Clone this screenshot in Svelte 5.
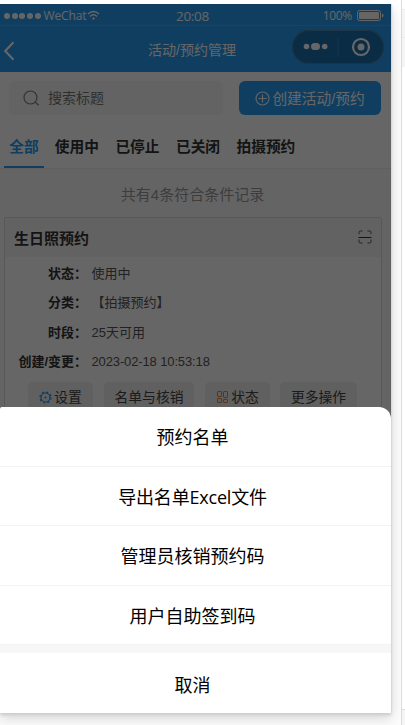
<script>
  const tabs = ['全部', '使用中', '已停止', '已关闭', '拍摄预约'];
  const rows = [
    ['状态', '使用中'],
    ['分类', '【拍摄预约】'],
    ['时段', '25天可用'],
    ['创建/变更', '2023-02-18 10:53:18']
  ];
  const actions = ['预约名单', '导出名单Excel文件', '管理员核销预约码', '用户自助签到码'];
</script>

<div class="stage">
  <div class="phone">
    <header>
      <div class="status">
        <div class="signal">
          {#each Array(5) as _}<i></i>{/each}
          <span>WeChat</span>
          <svg width="13" height="11" viewBox="0 0 13 11" fill="none" stroke="#fff" stroke-width="1.4">
            <path d="M1 4Q6.5-.8 12 4M3 6.4Q6.5 3.3 10 6.4" />
            <path d="M4.9 8.2Q6.5 7 8.1 8.2L6.5 10Z" fill="#fff" stroke="none" />
          </svg>
        </div>
        <span class="clock">20:08</span>
        <div class="power">
          <span>100%</span>
          <svg width="27" height="12" viewBox="0 0 27 12">
            <rect x=".5" y=".5" width="23" height="10" rx="2" fill="none" stroke="#fff" />
            <rect x="2" y="2" width="20" height="7" rx=".5" fill="#fff" />
            <path d="M25 3.500v4q1.500-.4 1.500-2T25 3.500Z" fill="#fff" />
          </svg>
        </div>
      </div>
      <div class="nav">
        <svg class="back" width="12" height="20" viewBox="0 0 12 20" fill="none" stroke="#fff" stroke-width="2"><path d="M9.500 1.200 1.200 10l8.300 8.800" /></svg>
        <h1>活动/预约管理</h1>
        <div class="capsule">
          <svg width="92" height="34" viewBox="0 0 92 34" fill="#fff">
            <circle cx="14.5" cy="16.5" r="2.8" /><rect x="19" y="13" width="9" height="7" rx="3.5" /><circle cx="32.7" cy="16.5" r="2.8" />
            <path d="M46 7.5v19" stroke="#4a82aa" />
            <circle cx="69" cy="17" r="8" fill="none" stroke="#fff" stroke-width="2.2" /><circle cx="69" cy="17" r="3.5" />
          </svg>
        </div>
      </div>
    </header>

    <div class="tools">
      <div class="search">
        <svg width="17" height="17" viewBox="0 0 17 17" fill="none" stroke="#73818a" stroke-width="1.2"><circle cx="7.5" cy="7.5" r="6.5" /><path d="m12.3 12.3 3.4 3" /></svg>
        <span>搜索标题</span>
      </div>
      <div class="create">
        <svg width="15" height="15" viewBox="0 0 15 15" fill="none" stroke="#fff" stroke-width="1.1"><circle cx="7.5" cy="7.5" r="6.5" /><path d="M3.5 7.5h8M7.5 3.5v8" /></svg>
        <span>创建活动/预约</span>
      </div>
    </div>

    <div class="tabs">
      {#each tabs as tab, i}<div class:active={i === 0}>{tab}</div>{/each}
    </div>

    <div class="list">
      <div class="count">共有4条符合条件记录</div>
      <section>
        <div class="cardhead">
          <b>生日照预约</b>
          <svg width="14" height="14" viewBox="0 0 14 14" fill="none" stroke="#555"><path d="M1 4.2V2.5Q1 1 2.5 1h2M9.5 1h2Q13 1 13 2.5v1.7M1 9.5v2Q1 13 2.5 13h2M9.5 13h2q1.500 0 1.500-1.500v-2" /><path d="M.5 7.500h13" stroke="#333" /></svg>
        </div>
        <div class="rows">
          {#each rows as [label, value]}
            <div class="row"><b>{label}：</b><span>{value}</span></div>
          {/each}
        </div>
        <div class="buttons">
          <div class="btn settings">
            <svg width="13" height="13" viewBox="0 0 13 13" fill="none" stroke="#2a92e8"><circle cx="6.5" cy="6.500" r="4.500" stroke-width="1.200" /><circle cx="6.500" cy="6.500" r="5.500" stroke-width="1.300" stroke-dasharray="2.100 2.220" /><circle cx="6.500" cy="6.500" r="1" fill="#2a92e8" stroke="none" /></svg>
            设置
          </div>
          <div class="btn names">名单与核销</div>
          <div class="btn state">
            <svg width="13" height="13" viewBox="0 0 13 13" fill="none" stroke="#ed7b30"><rect x="1.500" y=".5" width="4" height="5" rx=".6" /><rect x="7.500" y=".5" width="4" height="6" rx=".6" /><rect x="1.500" y="7.500" width="4" height="4" rx=".6" /><rect x="7.500" y="8.500" width="4" height="3" rx=".6" /></svg>
            状态
          </div>
          <div class="btn more">更多操作</div>
        </div>
      </section>
    </div>

    <div class="mask"></div>
    <div class="sheet">
      {#each actions as action}<div class="action">{action}</div>{/each}
      <div class="gap"></div>
      <div class="action cancel">取消</div>
    </div>
  </div>
  <div class="gutter"></div>
  <aside><div class="blank"></div><div class="cell first"></div><div class="cell"></div><div class="space"></div><div class="foot"></div></aside>
</div>

<style>
  .stage { width: 405px; height: 725px; display: flex; overflow: hidden; background: linear-gradient(#fff 0 4px, #fcfcfc 40px); font-family: "Liberation Sans", "Noto Sans CJK SC", sans-serif; box-sizing: border-box; }
  .stage * { box-sizing: border-box; }
  svg { display: block; flex: none; }
  .phone { position: relative; width: 391px; height: 709px; margin-top: 4px; background: #fafafa; box-shadow: 1px 0 0 #d8d8d8, 0 2px 3px #ccc, 0 5px 12px #d4d4d4; clip-path: inset(0 -14px -20px 0); flex: none; }
  header { height: 68px; background: #289bf2; color: #fff; }
  .status { display: flex; height: 22px; align-items: center; border-bottom: 1px solid #4ba5e8; font: 12px "Open Sans", sans-serif; padding: 2px 7px 0 4px; }
  .signal, .power { display: flex; align-items: center; flex: 1; }
  .signal i { width: 6px; height: 6px; border-radius: 50%; background: #fff; margin-right: 1.7px; flex: none; }
  .signal span { margin-left: 1px; letter-spacing: -.1px; }
  .clock { font-size: 13.500px; letter-spacing: -.3px; margin-right: 3px; }
  .power { justify-content: flex-end; gap: 5px; }
  .power span { letter-spacing: -.3px; }
  .nav { height: 46px; display: flex; align-items: center; justify-content: space-between; padding-left: 4px; }
  h1 { font-size: 14px; line-height: 20px; font-weight: 400; margin: 2px 0 0 76px; }
  .back { margin-top: 3px; }
  .capsule { width: 92px; height: 34px; border-radius: 17px; background: #1a6eab; box-shadow: inset 0 0 0 1px #4a82aa; margin: -4px 7px 0 0; }
  .tools { height: 52px; display: flex; gap: 16px; padding: 9px 10px 9px 9px; background: #fff; }
  .search, .create { border-radius: 6px; height: 34px; display: flex; align-items: center; font-size: 14px; }
  .search { width: 214px; background: #f7f7f7; color: #777; padding-left: 14px; gap: 8px; }
  .search span { position: relative; top: -1px; }
  .create { flex: 1; background: #289bf2; color: #fff; justify-content: center; gap: 2px; font-size: 14.700px; white-space: nowrap; }
  .create span { position: relative; top: -1px; }
  .tabs { height: 45px; display: flex; gap: 16.5px; padding-left: 4px; background: #fff; border-bottom: 1px solid #eee; font-size: 14.700px; font-weight: 700; line-height: 46px; color: #333; white-space: nowrap; }
  .tabs div:first-child { width: 40px; text-align: center; margin-right: -5.700px; }
  .tabs .active { color: #289bf2; border-bottom: 2px solid #289bf2; height: 44px; }
  .count { height: 48px; line-height: 52px; text-align: center; color: #999; font-size: 15px; padding-right: 6px; }
  section { margin-left: 4px; width: 378px; height: 200px; border: 1px solid #ddd; border-radius: 2px; background: #fff; }
  .cardhead { display: flex; justify-content: space-between; align-items: center; height: 39px; padding: 0 9px 1px; background: #f5f5f5; font-size: 15px; color: #333; }
  .rows { font-size: 13px; line-height: 29.3px; padding-top: 2px; color: #555; }
  .row { display: flex; height: 29.300px; white-space: nowrap; }
  .row b { width: 82px; text-align: right; color: #333; margin-right: 4.500px; }
  .row:last-child span { letter-spacing: -.13px; }
  .buttons { display: flex; padding: 6px 0 0 23px; font-size: 13.800px; line-height: 30px; color: #444; }
  .btn { height: 31px; background: #f0f0f0; border-radius: 5px; display: flex; align-items: center; justify-content: center; gap: 2px; margin-right: 11px; white-space: nowrap; flex: none; }
  .settings { width: 65px; } .names { width: 90px; } .state { width: 65px; } .more { width: 77px; margin-left: -1px; }
  .mask { position: absolute; inset: 0; background: rgba(0,0,0,.6); }
  .sheet { position: absolute; left: 0; right: 0; bottom: 0; height: 306px; background: #fff; border-radius: 2px 12px 0 0; overflow: hidden; font: 18px "Open Sans", "Noto Sans CJK SC", sans-serif; color: #000; }
  .action { height: 59.500px; display: flex; align-items: center; justify-content: center; border-bottom: 1px solid #f3f3f3; padding: 0 6px 0 0; }
  .action:nth-child(2) { letter-spacing: -.2px; }
  .gap { height: 8px; background: #f7f7f7; }
  .cancel { border: 0; height: 60px; padding-top: 1px; }
  .gutter { width: 10px; }
  aside { width: 4px; border-left: 1px solid #ddd; background: #fff; display: flex; flex-direction: column; }
  .blank { height: 9px; }
  .cell { height: 30px; background: #f5f5f5; border-top: 1px solid #ececec; }
  .cell.first { height: 28px; }
  .space { flex: 1; }
  .foot { height: 16px; background: #f5f5f5; border-top: 1px solid #ddd; }
</style>
